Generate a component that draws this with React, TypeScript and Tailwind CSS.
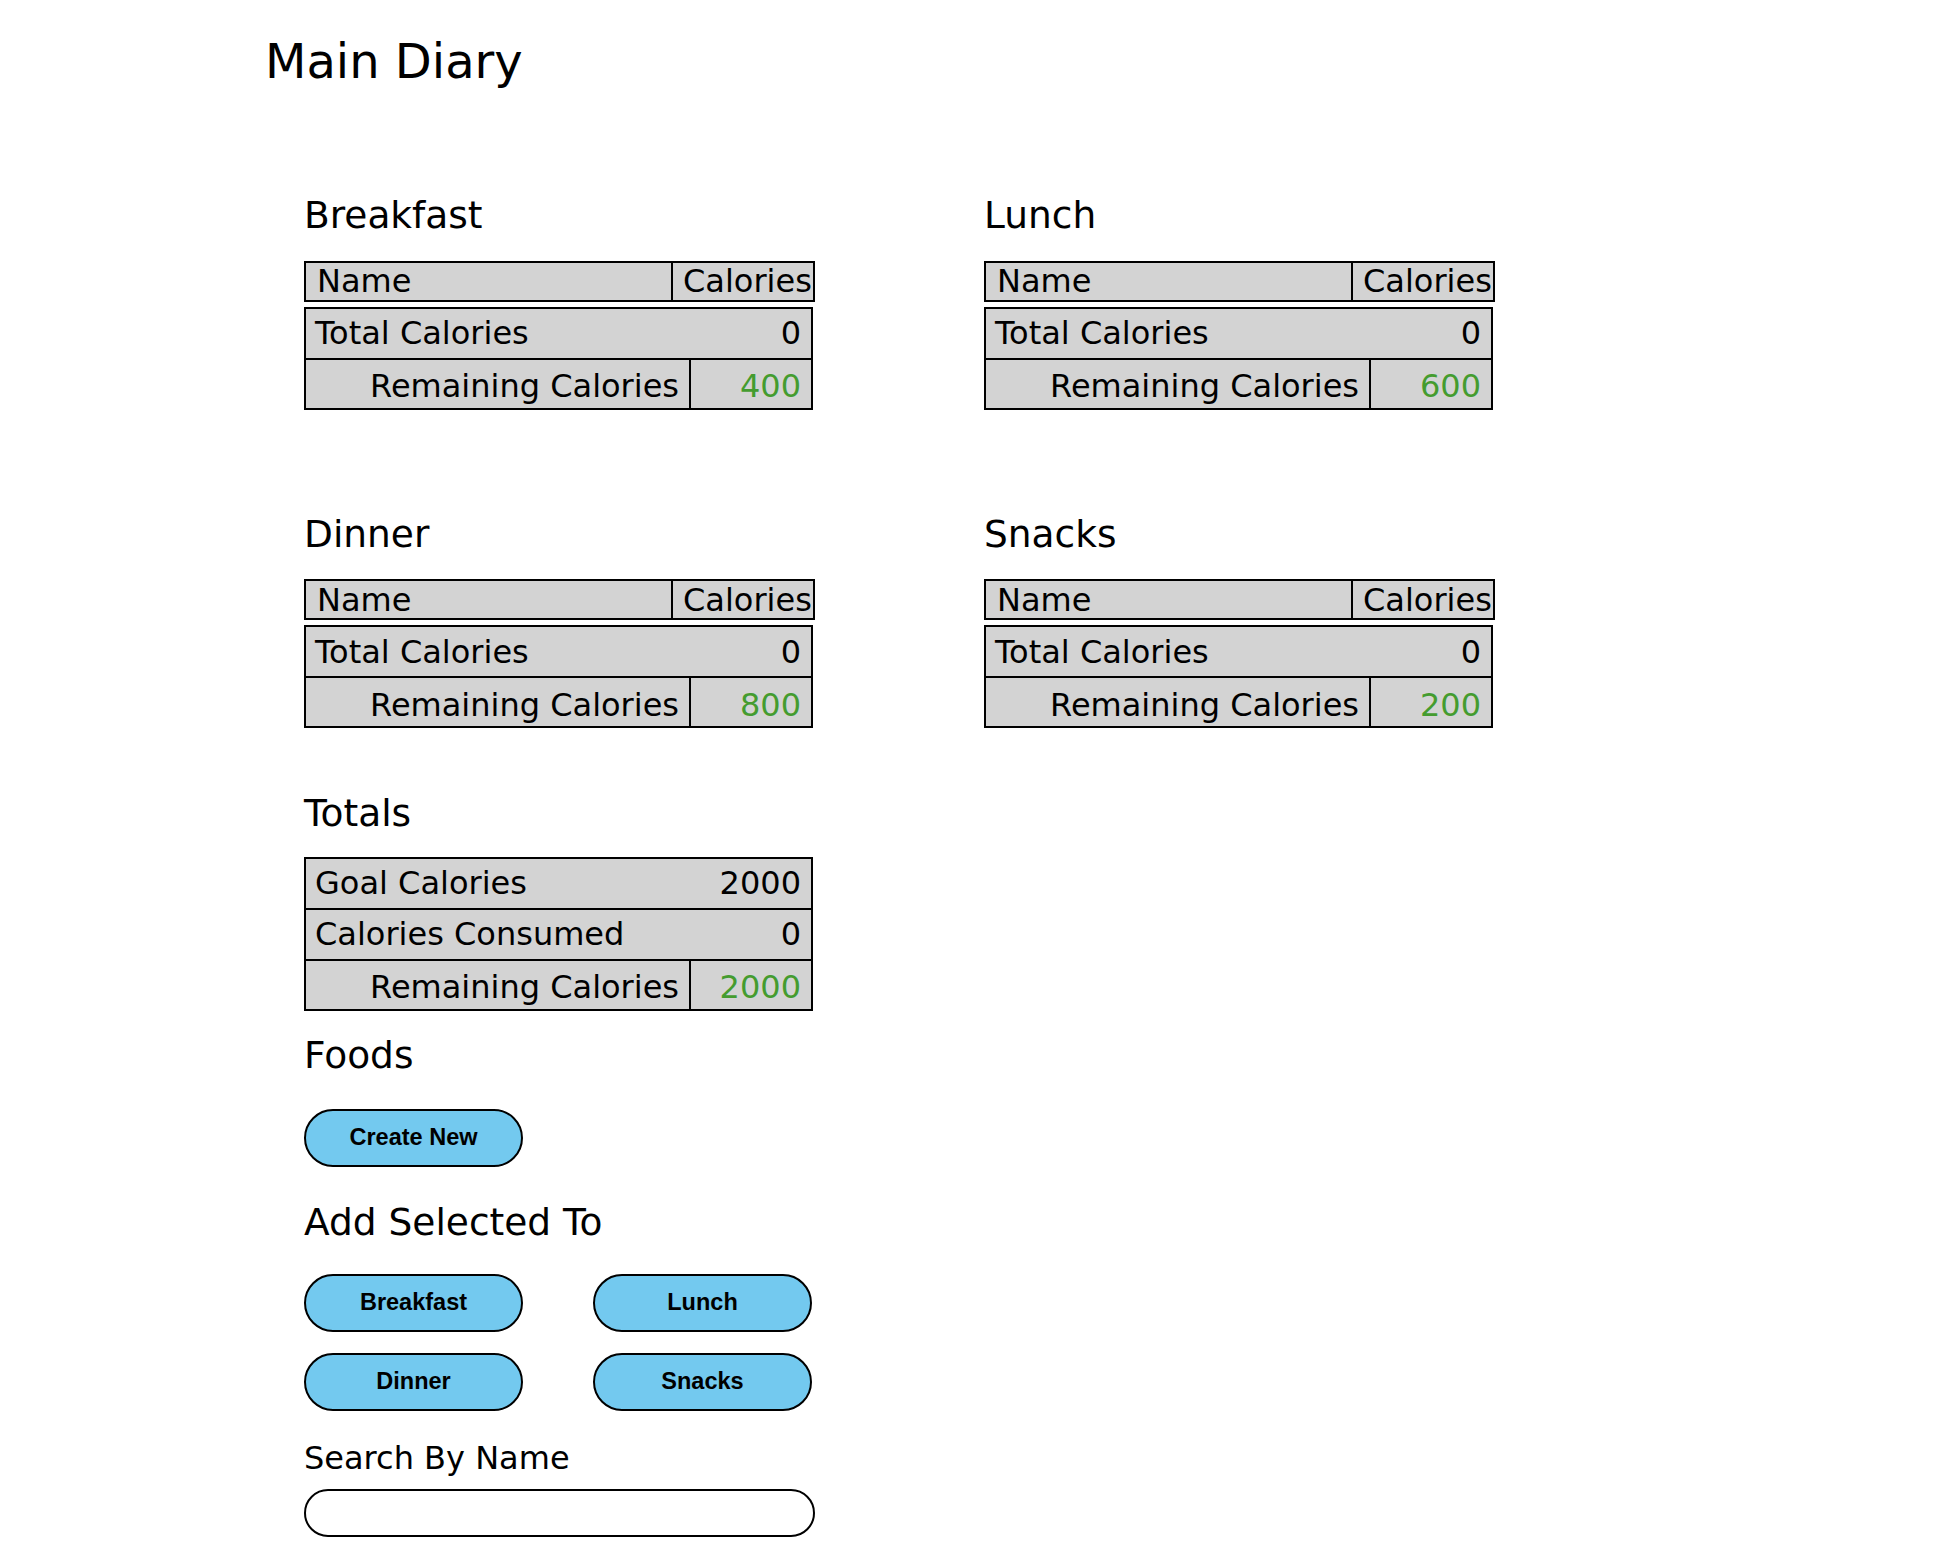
const meals = [
  { name: "Breakfast", remaining: 400 },
  { name: "Lunch", remaining: 600 },
  { name: "Dinner", remaining: 800 },
  { name: "Snacks", remaining: 200 },
];

const RemainingRow = ({ value }: { value: number }) => (
  <div className="flex h-[48px]">
    <div className="flex w-[385px] items-center justify-end border-r-2 border-black pr-[10px] pt-[5px]">
      Remaining Calories
    </div>
    <div className="flex flex-1 items-center justify-end pr-[10px] pt-[5px] text-[#449c2f]">
      {value}
    </div>
  </div>
);

const MealTable = ({ name, remaining }: { name: string; remaining: number }) => (
  <section>
    <h2 className="text-[37.5px] leading-[36px]">{name}</h2>
    <div className="mt-[27.5px] flex h-[41px] w-[511px] border-2 border-black bg-[#d3d3d3] text-[32px] leading-[32px]">
      <div className="flex w-[367px] items-center border-r-2 border-black pl-[11px]">Name</div>
      <div className="flex flex-1 items-center pl-[10px]">Calories</div>
    </div>
    <div className="mt-[5px] w-[509px] border-2 border-black bg-[#d3d3d3] text-[32px] leading-[32px]">
      <div className="flex h-[51px] items-center justify-between border-b-2 border-black pl-[9px] pr-[10px]">
        <span>Total Calories</span>
        <span>0</span>
      </div>
      <RemainingRow value={remaining} />
    </div>
  </section>
);

const PillButton = ({ label }: { label: string }) => (
  <button className="h-[58px] w-[219px] rounded-full border-2 border-black bg-[#73c9ef] font-['Liberation_Sans',Arial,sans-serif] text-[23.5px] font-bold text-black">
    {label}
  </button>
);

export default function App() {
  return (
    <div className="min-h-[1550px] bg-white pl-[265px] pt-[37px] font-['DejaVu_Sans',sans-serif] text-black">
      <h1 className="text-[48px] leading-[48px]">Main Diary</h1>
      <div className="pl-[39px]">
        <div className="mt-[112px] grid grid-cols-[680px_511px] gap-y-[106px]">
          {meals.map((m) => (
            <MealTable key={m.name} name={m.name} remaining={m.remaining} />
          ))}
        </div>

        <h2 className="mt-[66.5px] text-[37.5px] leading-[36px]">Totals</h2>
        <div className="mt-[26px] w-[509px] border-2 border-black bg-[#d3d3d3] text-[32px] leading-[32px]">
          <div className="flex h-[51px] items-center justify-between border-b-2 border-black pl-[9px] pr-[10px]">
            <span>Goal Calories</span>
            <span>2000</span>
          </div>
          <div className="flex h-[51px] items-center justify-between border-b-2 border-black pl-[9px] pr-[10px]">
            <span>Calories Consumed</span>
            <span>0</span>
          </div>
          <RemainingRow value={2000} />
        </div>

        <h2 className="mt-[26.5px] text-[37.5px] leading-[36px]">Foods</h2>
        <div className="mt-[36px]">
          <PillButton label="Create New" />
        </div>

        <h2 className="mt-[36.5px] text-[37.5px] leading-[36px]">Add Selected To</h2>
        <div className="mt-[34px] grid w-fit grid-cols-[219px_219px] gap-x-[70px] gap-y-[21px]">
          <PillButton label="Breakfast" />
          <PillButton label="Lunch" />
          <PillButton label="Dinner" />
          <PillButton label="Snacks" />
        </div>

        <label className="mt-[31px] block text-[32px] leading-[32px]">Search By Name</label>
        <input
          type="text"
          className="mt-[15.5px] block h-[48px] w-[511px] rounded-full border-2 border-black bg-white px-5 outline-none"
        />
      </div>
    </div>
  );
}
